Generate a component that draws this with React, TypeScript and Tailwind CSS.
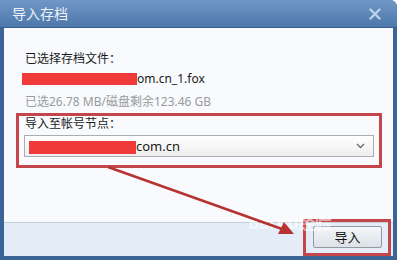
import React from "react";

const font = { fontFamily: '"Noto Sans", "Noto Sans CJK SC", sans-serif' };

export default function App() {
  return (
    <div className="relative w-[399px] h-[260px] bg-white overflow-hidden" style={font}>
      <div className="w-[397px] h-[260px] bg-[#3a6596] rounded-tr-[7px] flex flex-col overflow-hidden">
        <div className="h-[28px] shrink-0 flex items-center justify-between pl-[12px] pr-[16px] bg-gradient-to-b from-[#7097c6] to-[#4d78ab] border-b border-[#3b5f8a]">
          <span className="text-[14px] leading-none text-[#eef3f9]">导入存档</span>
          <svg width="12" height="12" viewBox="0 0 12 12">
            <path d="M1.5 1.5 L10.5 10.5 M10.5 1.5 L1.5 10.5" stroke="#bcd1ea" strokeWidth="2.4" strokeLinecap="round" />
          </svg>
        </div>
        <div className="flex-1 mx-[4px] mb-[4px] flex flex-col">
          <div className="flex-1 bg-[#f8fafd] pl-[21px] pt-[24px] text-[12px] leading-[14px] text-[#1a1a1a]">
            <div>已选择存档文件：</div>
            <div className="mt-[6px] flex items-center h-[14px]">
              <span className="ml-[-3px] inline-block w-[115px] h-[12px] bg-[#f03a3a]" />
              <span>om.cn_1.fox</span>
            </div>
            <div className="mt-[9px] text-[#9a9a9a]">已选26.78 MB/磁盘剩余123.46 GB</div>
            <div className="mt-[8px]">导入至帐号节点：</div>
            <div className="mt-[4px] ml-[-1px] w-[350px] h-[22px] border border-[#abadb3] bg-gradient-to-b from-[#ffffff] to-[#eeeeee] flex items-center pl-[4px] pr-[8px]">
              <span className="inline-block w-[107px] h-[13px] bg-[#f03a3a] mt-[3px]" />
              <span className="flex-1 text-[13px]">com.cn</span>
              <svg width="9" height="6" viewBox="0 0 9 6">
                <path d="M1 1 L4.5 4.5 L8 1" stroke="#6a6a6a" strokeWidth="1.3" fill="none" />
              </svg>
            </div>
          </div>
          <div className="h-[34px] shrink-0 border-t border-[#c5cfda] bg-[#e4edf7] flex items-start justify-end pr-[11px] pt-[3px]">
            <button className="w-[69px] h-[22px] border border-[#8f9aa6] rounded-[2px] bg-gradient-to-b from-[#f4f6f8] to-[#dde2e7] text-[13px] leading-none text-[#111]">
              导入
            </button>
          </div>
        </div>
      </div>

      {/* annotations */}
      <div className="absolute left-[16px] top-[113px] w-[366px] h-[55px] border-[3px] border-[#c4464a]" />
      <div className="absolute left-[303px] top-[219px] w-[88px] h-[37px] border-[3px] border-[#c4464a]" />
      <div className="absolute left-[248px] top-[214px] text-[17px] leading-none font-bold text-white/60 tracking-tight">Bai du经验</div>
      <svg className="absolute left-0 top-0" width="399" height="260" viewBox="0 0 399 260">
        <line x1="108" y1="167" x2="282" y2="229" stroke="#b73232" strokeWidth="2.6" />
        <polygon points="294,234 278,234 284,222" fill="#b73232" />
      </svg>
    </div>
  );
}
